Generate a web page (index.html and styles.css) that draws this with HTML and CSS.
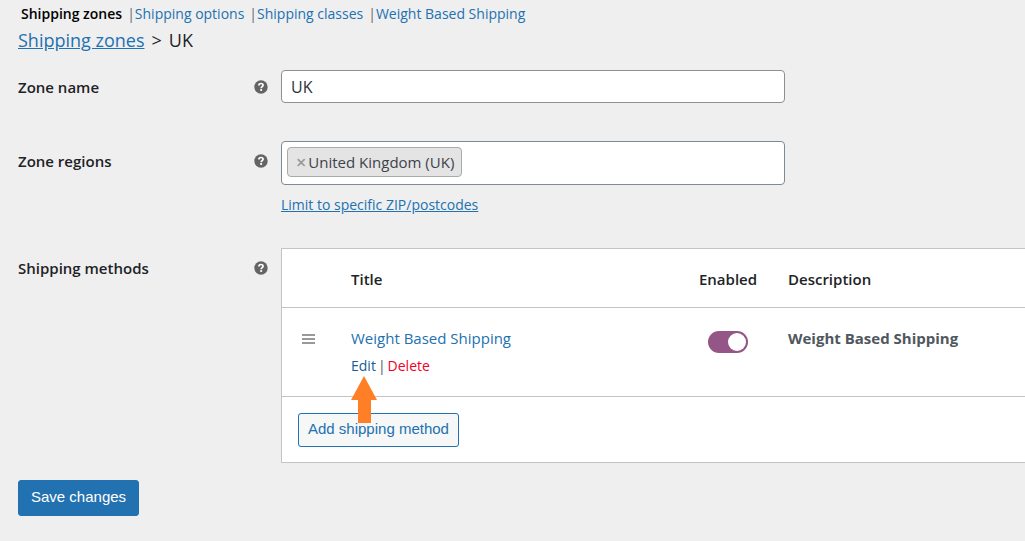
FILE: index.html
```html
<!DOCTYPE html>
<html lang="en">
<head>
    <meta charset="UTF-8">
    <meta name="viewport" content="width=device-width, initial-scale=1.0">
    <title>Shipping zones</title>
    <link rel="stylesheet" href="styles.css">
</head>
<body>
    <svg width="0" height="0" class="sprite" aria-hidden="true">
        <symbol id="help" viewBox="0 0 14 14">
            <circle cx="7" cy="7" r="6.7" fill="#646464"/>
            <path d="M4.9 5.4C4.9 4.1 5.8 3.5 7 3.5s2.1.6 2.1 1.7c0 1.4-1.9 1.5-1.9 3" fill="none" stroke="#fff" stroke-width="1.7"/>
            <rect x="6.2" y="9.1" width="1.9" height="1.8" fill="#fff"/>
        </symbol>
    </svg>

    <nav class="subnav">
        <a href="#" class="current">Shipping zones</a>
        <a href="#">Shipping options</a>
        <a href="#">Shipping classes</a>
        <a href="#">Weight Based Shipping</a>
    </nav>

    <form onsubmit="return false">
        <h2 class="breadcrumb"><a href="#">Shipping zones</a> <span>&gt;</span> <span>UK</span></h2>

        <div class="form-row row-name">
            <div class="row-label">
                <label for="zoneName">Zone name</label>
                <svg class="help"><use href="#help"/></svg>
            </div>
            <input type="text" id="zoneName" class="zone-name" value="UK">
        </div>

        <div class="form-row row-regions">
            <div class="row-label">
                <label for="zoneRegions">Zone regions</label>
                <svg class="help"><use href="#help"/></svg>
            </div>
            <div class="regions">
                <div class="select-box">
                    <span class="tag"><button type="button" class="remove" aria-label="Remove">×</button>United Kingdom (UK)</span>
                    <input type="text" id="zoneRegions" class="search">
                </div>
                <a href="#" class="postcodes">Limit to specific ZIP/postcodes</a>
            </div>
        </div>

        <div class="form-row row-methods">
            <div class="row-label">
                <span>Shipping methods</span>
                <svg class="help"><use href="#help"/></svg>
            </div>
            <table class="methods">
                <thead>
                    <tr>
                        <th class="col-sort"></th>
                        <th class="col-title">Title</th>
                        <th class="col-enabled">Enabled</th>
                        <th>Description</th>
                    </tr>
                </thead>
                <tbody>
                    <tr>
                        <td class="col-sort">
                            <svg class="handle" viewBox="0 0 13 10">
                                <path d="M0 1h13M0 5h13M0 9h13" stroke="#999" stroke-width="2"/>
                            </svg>
                        </td>
                        <td>
                            <a href="#" class="method-name">Weight Based Shipping</a>
                            <div class="row-actions">
                                <span class="edit-wrap"><a href="#" class="edit">Edit</a><svg class="arrow" viewBox="0 0 26 47"><path d="M13 0L26 24H20V47H7V24H0z" fill="#ff7f27"/></svg></span>
                                <span>|</span>
                                <a href="#" class="delete">Delete</a>
                            </div>
                        </td>
                        <td class="col-enabled">
                            <input type="checkbox" class="toggle" aria-label="Enabled" checked>
                        </td>
                        <td><strong>Weight Based Shipping</strong></td>
                    </tr>
                </tbody>
                <tfoot>
                    <tr>
                        <td colspan="4"><button type="button" class="button">Add shipping method</button></td>
                    </tr>
                </tfoot>
            </table>
        </div>

        <button type="submit" class="button primary">Save changes</button>
    </form>
</body>
</html>
```
FILE: styles.css
```css
* {
    box-sizing: border-box;
}

body {
    margin: 0;
    padding: 4px 0 24px 18px;
    background: #efefef;
    color: #1d2327;
    font-family: "Open Sans", "Noto Sans", sans-serif;
    font-size: 15px;
    line-height: 20px;
}

a {
    color: #2271b1;
}

.sprite {
    position: absolute;
}

.subnav {
    display: flex;
    gap: 5px;
    padding-left: 3px;
    font-size: 14px;
}

.subnav a {
    text-decoration: none;
}

.subnav a + a::before {
    content: "|";
    color: #646970;
}

.subnav .current {
    color: #000;
    font-weight: 600;
}

.breadcrumb {
    display: flex;
    gap: 7px;
    margin: 4px 0 18px;
    font-size: 18px;
    font-weight: 400;
    line-height: 24px;
}

.form-row {
    display: grid;
    grid-template-columns: 250px minmax(0, 1fr);
    column-gap: 13px;
    align-items: start;
}

.row-label {
    display: flex;
    justify-content: space-between;
    align-items: center;
    font-weight: 600;
}

.help {
    width: 14px;
    height: 14px;
}

.row-name {
    margin-bottom: 38px;
}

.row-name .row-label {
    padding-top: 7px;
}

.row-regions {
    margin-bottom: 33px;
}

.row-regions .row-label {
    padding-top: 10px;
}

.row-methods .row-label {
    padding-top: 10px;
}

.zone-name,
.select-box {
    width: 100%;
    max-width: 504px;
    background: #fff;
    border: 1px solid #8c8f94;
    border-radius: 4px;
}

.zone-name {
    height: 33px;
    padding: 0 9px;
    color: #2c3338;
    font: inherit;
    font-size: 16px;
}

.select-box {
    display: flex;
    height: 44px;
    padding: 5px;
    border-color: #7e8993;
}

.tag {
    display: flex;
    align-items: center;
    height: 30px;
    padding: 0 7px 0 8px;
    background: #e4e4e4;
    border: 1px solid #aaa;
    border-radius: 4px;
    color: #3c434a;
    white-space: nowrap;
}

.remove {
    padding: 0 2px 0 0;
    background: none;
    border: 0;
    color: #999;
    font: inherit;
    font-size: 18px;
    font-weight: 600;
    cursor: pointer;
}

.search {
    flex: 1;
    min-width: 0;
    background: none;
    border: 0;
    outline: none;
}

.postcodes {
    display: block;
    margin-top: 10px;
    font-size: 14px;
}

.methods {
    width: 100%;
    background: #fff;
    border: 1px solid #c3c4c7;
    border-right: 0;
    border-spacing: 0;
    table-layout: fixed;
}

.methods th,
.methods td {
    padding: 0;
    text-align: left;
    vertical-align: top;
}

.methods th {
    height: 59px;
    padding-top: 20px;
    border-bottom: 1px solid #c3c4c7;
    font-weight: 600;
}

.methods tbody td {
    height: 89px;
    padding-top: 20px;
    border-bottom: 1px solid #c3c4c7;
    color: #50575e;
}

.methods tfoot td {
    padding: 16px 16px 15px;
}

.methods .col-sort {
    width: 69px;
    padding-left: 20px;
}

.col-title {
    width: 338px;
}

.methods .col-enabled {
    width: 99px;
    padding-right: 21px;
    text-align: center;
}

.handle {
    width: 13px;
    height: 10px;
}

.method-name,
.row-actions a {
    text-decoration: none;
}

.row-actions {
    display: flex;
    gap: 2px;
    margin-top: 8px;
    font-size: 14px;
}

.row-actions .edit {
    color: #135e96;
}

.row-actions .delete {
    color: #f00028;
}

.edit-wrap {
    position: relative;
}

/* points at the Edit link, over the table */
.arrow {
    position: absolute;
    top: 20px;
    left: 0;
    width: 26px;
    height: 47px;
}

.toggle {
    appearance: none;
    width: 40px;
    height: 22px;
    margin: 3px 0 0;
    padding: 2px;
    background: #935687;
    border-radius: 11px;
}

.toggle::before {
    content: "";
    display: block;
    width: 18px;
    height: 18px;
    border-radius: 50%;
    background: #fff;
}

.toggle:checked::before {
    margin-left: auto;
}

.button {
    height: 34px;
    padding: 0 9px 3px;
    background: #f6f7f7;
    border: 1px solid #2271b1;
    border-radius: 3px;
    color: #2271b1;
    font-family: "Liberation Sans", Arial, sans-serif;
    font-size: 15px;
    cursor: pointer;
}

.primary {
    height: 36px;
    margin-top: 17px;
    padding: 0 12px 3px;
    background: #2271b1;
    color: #fff;
}
```
